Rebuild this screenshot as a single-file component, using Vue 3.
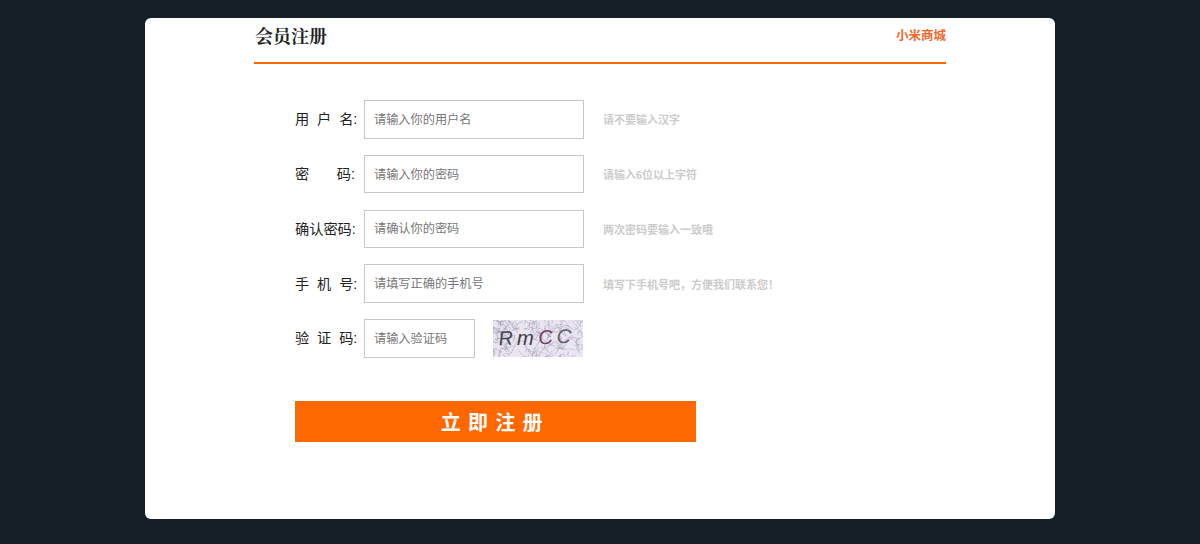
<script setup>
const rows = [
  { label: '用\u00a0\u00a0户\u00a0\u00a0名:', ph: '请输入你的用户名', tip: '请不要输入汉字' },
  { label: '密\u00a0\u00a0\u00a0\u00a0\u00a0\u00a0\u00a0码:', ph: '请输入你的密码', tip: '请输入6位以上字符' },
  { label: '确认密码:', ph: '请确认你的密码', tip: '两次密码要输入一致哦' },
  { label: '手\u00a0\u00a0机\u00a0\u00a0号:', ph: '请填写正确的手机号', tip: '填写下手机号吧，方便我们联系您！' },
]
const noise = []
let s = 7
const r = (n) => { s = (s * 9301 + 49297) % 233280; return (s / 233280) * n }
for (let i = 0; i < 190; i++) {
  const x = r(90), y = r(37)
  noise.push({ d: `M${x.toFixed(1)} ${y.toFixed(1)}l${(r(14) - 7).toFixed(1)} ${(r(14) - 7).toFixed(1)}l${(r(10) - 5).toFixed(1)} ${(r(10) - 5).toFixed(1)}`, c: i % 3 ? '#9c96ad' : '#c0a9bf' })
}
</script>

<template>
  <div class="page">
    <main class="card">
      <header class="head">
        <h1 class="title">会员注册</h1>
        <a class="shop">小米商城</a>
      </header>
      <form class="form" @submit.prevent>
        <div v-for="row in rows" :key="row.ph" class="row">
          <label class="label">{{ row.label }}</label>
          <input class="field" :placeholder="row.ph" />
          <span class="tip">{{ row.tip }}</span>
        </div>
        <div class="row">
          <label class="label">验&nbsp;&nbsp;证&nbsp;&nbsp;码:</label>
          <input class="field short" placeholder="请输入验证码" />
          <svg class="captcha" viewBox="0 0 90 37" width="90" height="37">
            <rect width="90" height="37" fill="#e9e6f2" />
            <path v-for="(n, i) in noise" :key="i" :d="n.d" :stroke="n.c" stroke-width=".5" fill="none" />
            <text x="6" y="25" class="cap" fill="#45454f" transform="rotate(-4 12 24)">R</text>
            <text x="24" y="25" class="cap" fill="#3c3c46">m</text>
            <text x="46" y="24" class="cap" fill="#6b3f5c" transform="rotate(-6 52 24)">C</text>
            <text x="63" y="23" class="cap" fill="#5c6068" transform="rotate(6 70 23)">C</text>
          </svg>
        </div>
        <button class="submit" type="submit">立即注册</button>
      </form>
    </main>
  </div>
</template>

<style>
html, body { margin: 0; background: #141f28; }
</style>

<style scoped>
.page {
  height: 544px;
  box-sizing: border-box;
  padding-top: 18px;
  background: #141f28;
  font-family: "Liberation Sans", "Noto Sans CJK SC", sans-serif;
  overflow: hidden;
}
.card {
  width: 910px;
  height: 501px;
  margin: 0 auto;
  box-sizing: border-box;
  padding: 0 109px;
  background: #fff;
  border-radius: 6px;
}
.head {
  height: 44px;
  display: flex;
  justify-content: space-between;
  align-items: flex-start;
  padding-left: 1px;
  border-bottom: 2px solid #ff6700;
}
.title {
  margin: 8px 0 0;
  font: 700 18px/1 "Noto Serif CJK SC", serif;
  color: #222;
}
.shop {
  margin-top: 10px;
  font-size: 12.5px;
  line-height: 16px;
  font-weight: 700;
  color: #f0682a;
}
.form {
  padding: 36px 0 0 41px;
  display: flex;
  flex-direction: column;
  gap: 16.25px;
}
.row {
  display: flex;
  align-items: center;
  height: 38.5px;
}
.label {
  width: 69px;
  flex: none;
  font-size: 14.2px;
  line-height: 18px;
  color: #222;
  white-space: nowrap;
}
.field {
  width: 220.4px;
  height: 38.5px;
  box-sizing: border-box;
  padding: 1px 9px 0;
  border: 1px solid #c8c8c8;
  outline: none;
  font: 12.2px "Liberation Sans", "Noto Sans CJK SC", sans-serif;
  background: #fff;
}
.field::placeholder { color: #777; opacity: 1; }
.field.short { width: 111px; }
.tip {
  margin-left: 18.6px;
  font-size: 11px;
  font-weight: 700;
  color: #ccc;
}
.captcha { margin-left: 18px; display: block; }
.cap {
  font: italic 400 20px "Liberation Sans", sans-serif;
}
.submit {
  width: 400.5px;
  height: 41px;
  margin-top: 27.5px;
  padding: 0;
  border: 0;
  background: #ff6700;
  color: #fff;
  letter-spacing: 7.3px;
  font: 700 20px "Liberation Sans", "Noto Sans CJK SC", sans-serif;
}
</style>
